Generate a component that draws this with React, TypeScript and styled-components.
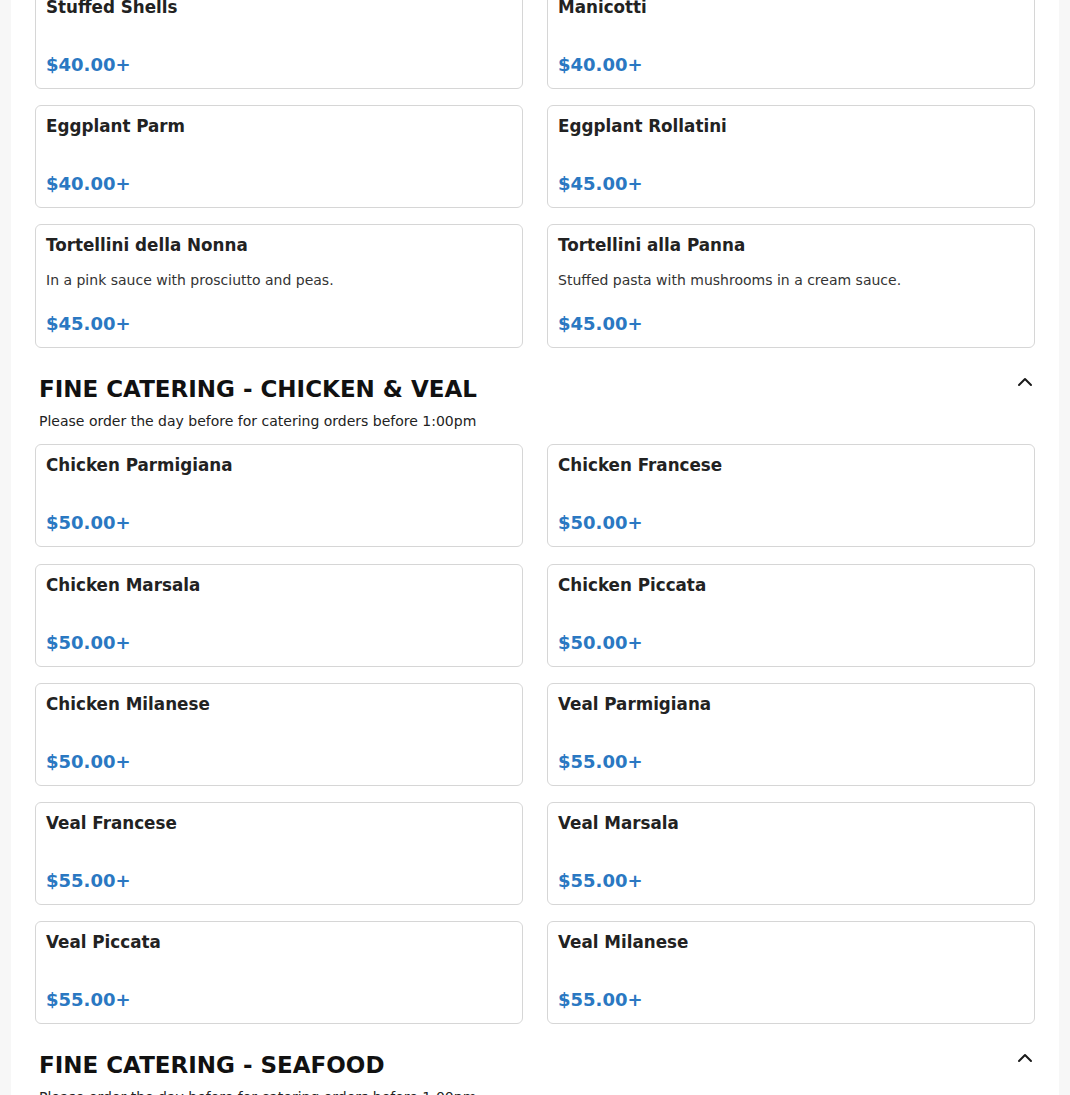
import React from "react";
import styled, { createGlobalStyle } from "styled-components";
import { ChevronUp } from "lucide-react";

const GlobalStyle = createGlobalStyle`
  html, body {
    margin: 0;
    padding: 0;
    background: #f7f7f7;
    font-family: "DejaVu Sans", "Noto Sans", sans-serif;
    color: #222;
  }
  * { box-sizing: border-box; }
`;

const Page = styled.div`
  margin: 0 11px;
  background: #ffffff;
  min-height: 1095px;
  overflow: hidden;
`;

const Content = styled.div`
  padding: 0 24px 40px;
  margin-top: -84.5px;
  display: flex;
  flex-direction: column;
  gap: 25.5px;
`;

const Section = styled.section`
  display: flex;
  flex-direction: column;
`;

const SectionHeader = styled.div`
  display: flex;
  align-items: flex-start;
  justify-content: space-between;
  padding-left: 4px;
`;

const SectionTitle = styled.h2`
  margin: 0;
  font-size: 23px;
  line-height: 30px;
  font-weight: 700;
  color: #111;
`;

const CollapseButton = styled.button`
  border: none;
  background: transparent;
  padding: 0;
  margin: -4px -2px 0 0;
  width: 24px;
  height: 24px;
  display: flex;
  align-items: center;
  justify-content: center;
  color: #1a1a1a;
  cursor: pointer;
`;

const Subtitle = styled.p`
  margin: 6.5px 0 12px;
  padding-left: 4px;
  font-size: 14px;
  line-height: 22px;
  color: #222;
`;

const Grid = styled.div`
  display: grid;
  grid-template-columns: 1fr 1fr;
  gap: 16.2px 24px;
`;

const Card = styled.div`
  border: 1px solid #d6d6d6;
  border-radius: 6px;
  background: #fff;
  padding: 10px 10px 12px;
  display: flex;
  flex-direction: column;
`;

const ItemName = styled.h3`
  margin: 0 0 13.5px;
  font-size: 16.75px;
  line-height: 21px;
  font-weight: 700;
  color: #222;
`;

const ItemDesc = styled.p`
  margin: 0;
  font-size: 14px;
  line-height: 21px;
  color: #333;
`;

const Price = styled.div`
  margin-top: 22.5px;
  font-size: 18px;
  line-height: 22px;
  font-weight: 700;
  color: #2a78c2;
`;

type Item = { name: string; price: string; desc?: string };
type SectionData = { title: string; subtitle: string; items: Item[] };

const note = "Please order the day before for catering orders before 1:00pm";

const sections: SectionData[] = [
  {
    title: "FINE CATERING - PASTA",
    subtitle: note,
    items: [
      { name: "Stuffed Shells", price: "$40.00+" },
      { name: "Manicotti", price: "$40.00+" },
      { name: "Eggplant Parm", price: "$40.00+" },
      { name: "Eggplant Rollatini", price: "$45.00+" },
      {
        name: "Tortellini della Nonna",
        price: "$45.00+",
        desc: "In a pink sauce with prosciutto and peas.",
      },
      {
        name: "Tortellini alla Panna",
        price: "$45.00+",
        desc: "Stuffed pasta with mushrooms in a cream sauce.",
      },
    ],
  },
  {
    title: "FINE CATERING - CHICKEN & VEAL",
    subtitle: note,
    items: [
      { name: "Chicken Parmigiana", price: "$50.00+" },
      { name: "Chicken Francese", price: "$50.00+" },
      { name: "Chicken Marsala", price: "$50.00+" },
      { name: "Chicken Piccata", price: "$50.00+" },
      { name: "Chicken Milanese", price: "$50.00+" },
      { name: "Veal Parmigiana", price: "$55.00+" },
      { name: "Veal Francese", price: "$55.00+" },
      { name: "Veal Marsala", price: "$55.00+" },
      { name: "Veal Piccata", price: "$55.00+" },
      { name: "Veal Milanese", price: "$55.00+" },
    ],
  },
  {
    title: "FINE CATERING - SEAFOOD",
    subtitle: note,
    items: [
      { name: "Shrimp Scampi", price: "$65.00+" },
      { name: "Shrimp Parmigiana", price: "$65.00+" },
    ],
  },
];

export default function App() {
  return (
    <>
      <GlobalStyle />
      <Page>
        <Content>
          {sections.map((s) => (
            <Section key={s.title}>
              <SectionHeader>
                <SectionTitle>{s.title}</SectionTitle>
                <CollapseButton aria-label="Collapse section">
                  <ChevronUp size={24} strokeWidth={2} />
                </CollapseButton>
              </SectionHeader>
              <Subtitle>{s.subtitle}</Subtitle>
              <Grid>
                {s.items.map((it) => (
                  <Card key={it.name}>
                    <ItemName>{it.name}</ItemName>
                    {it.desc && <ItemDesc>{it.desc}</ItemDesc>}
                    <Price>{it.price}</Price>
                  </Card>
                ))}
              </Grid>
            </Section>
          ))}
        </Content>
      </Page>
    </>
  );
}
